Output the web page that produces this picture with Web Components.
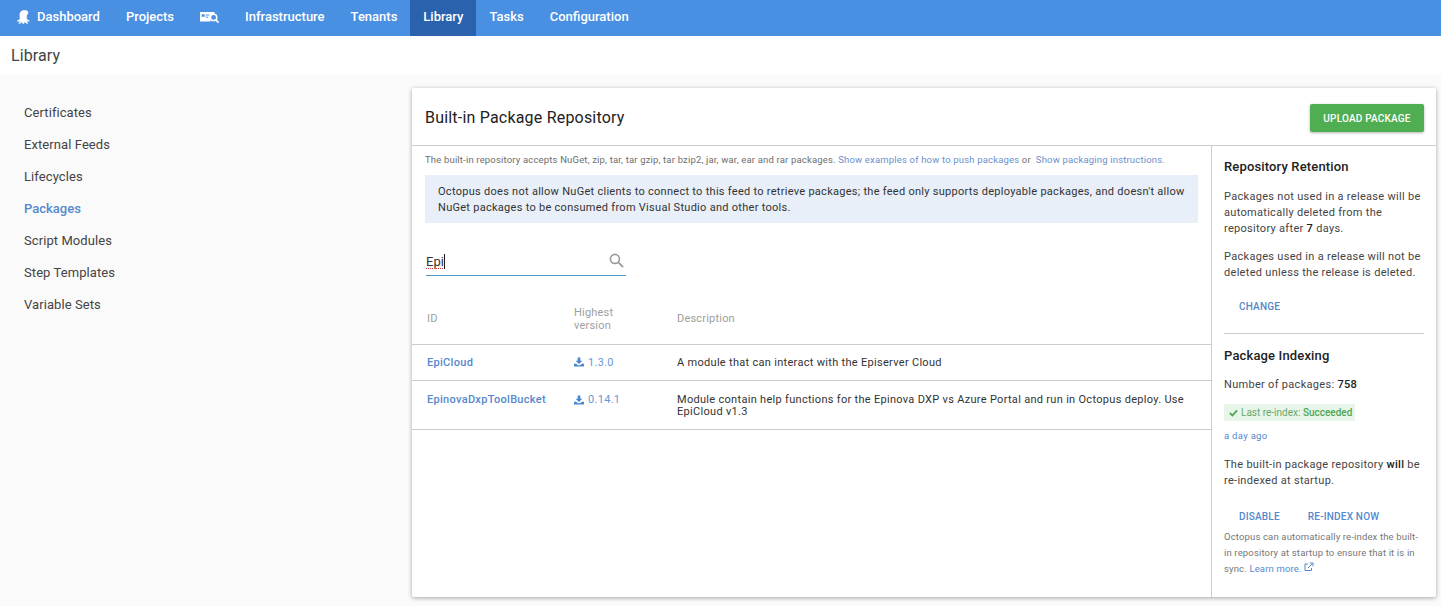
<!DOCTYPE html>
<html>
<head>
<meta charset="utf-8">
<title>Library</title>
<style>
  html, body { margin: 0; padding: 0; background: #fafafa; }
  body { font-family: Roboto, "Liberation Sans", sans-serif; color: #333; width: 1441px; height: 606px; overflow: hidden; }
</style>
</head>
<body>
<app-nav>
  <nav-item>
    <svg slot="icon" width="15" height="14" viewBox="0 0 15 14"><path fill="#fff" stroke="#fff" stroke-width=".5" d="M7.5.3C4.3.3 2.800 2.500 2.800 5c0 1.500.4 2.500.2 3.500-.2 1-1.200 1.700-2.400 2-.5.2-.4.8.1.8 1 0 1.800-.2 2.500-.6-.1 .9-.5 1.600-1.200 2.100-.4.3-.1.8.4.7 1.100-.2 2-1 2.500-2 .2.800.3 1.300.8 1.900.4.400.8.400 1.200 0 .4-.6.600-1.200.800-1.900.5 1 1.400 1.800 2.500 2 .5.100.8-.4.4-.7-.7-.5-1.100-1.200-1.200-2.100.7.400 1.500.6 2.500.6.500 0 .6-.6.100-.8-1.200-.3-2.200-1-2.400-2-.2-1 .2-2 .2-3.500C12.200 2.500 10.700.3 7.500.3z"/></svg>
    Dashboard
  </nav-item>
  <nav-item>Projects</nav-item>
  <nav-item>
    <svg slot="icon" width="19" height="14" viewBox="0 0 19 14"><path fill="#fff" d="M0 2h14.500v1.800a5 5 0 0 0-3.700 7.700H0z"/><rect x="1.700" y="4.300" width="3" height="2.500" fill="#4a90e2"/><rect x="5.800" y="4.500" width="3.500" height="1" fill="#4a90e2"/><rect x="5.800" y="6.700" width="2.500" height="1" fill="#4a90e2"/><circle cx="13.600" cy="7.400" r="3.200" fill="none" stroke="#fff" stroke-width="1.500"/><path d="M15.900 9.800l2.600 2.900" stroke="#fff" stroke-width="1.700" fill="none"/></svg>
  </nav-item>
  <nav-item>Infrastructure</nav-item>
  <nav-item>Tenants</nav-item>
  <nav-item active>Library</nav-item>
  <nav-item>Tasks</nav-item>
  <nav-item>Configuration</nav-item>
</app-nav>
<page-title>Library</page-title>
<page-body>
  <side-nav>
    <side-link>Certificates</side-link>
    <side-link>External Feeds</side-link>
    <side-link>Lifecycles</side-link>
    <side-link active>Packages</side-link>
    <side-link>Script Modules</side-link>
    <side-link>Step Templates</side-link>
    <side-link>Variable Sets</side-link>
  </side-nav>
  <repo-card>
    <span slot="title">Built-in Package Repository</span>
    <upload-button slot="action">UPLOAD PACKAGE</upload-button>
    <repo-main slot="main"></repo-main>
    <repo-side slot="side"></repo-side>
  </repo-card>
</page-body>

<script>
class AppNav extends HTMLElement {
  constructor() {
    super();
    this.attachShadow({ mode: "open" });
    this.shadowRoot.innerHTML = `
    <style>
      :host { display: flex; height: 36px; background: #4a90e2; padding-left: 4px; }
    </style>
    <slot></slot>`;
  }
}

class NavItem extends HTMLElement {
  constructor() {
    super();
    this.attachShadow({ mode: "open" });
    this.shadowRoot.innerHTML = `
    <style>
      :host { display: flex; align-items: center; gap: 5px; padding: 0 13px 3px; color: #fff; font-size: 13px; font-weight: 500; }
      :host([active]) { background: #2a62ae; }
    </style>
    <slot name="icon"></slot><slot></slot>`;
  }
}

class PageTitle extends HTMLElement {
  constructor() {
    super();
    this.attachShadow({ mode: "open" });
    this.shadowRoot.innerHTML = `
    <style>
      :host { display: flex; align-items: center; height: 39px; background: #fff; padding-left: 11px; font-size: 16px; color: #444; letter-spacing: 0.1px; }
    </style>
    <slot></slot>`;
  }
}

class PageBody extends HTMLElement {
  constructor() {
    super();
    this.attachShadow({ mode: "open" });
    this.shadowRoot.innerHTML = `
    <style>
      :host { display: flex; padding: 13px 5px 0 0; align-items: flex-start; }
    </style>
    <slot></slot>`;
  }
}

class SideNav extends HTMLElement {
  constructor() {
    super();
    this.attachShadow({ mode: "open" });
    this.shadowRoot.innerHTML = `
    <style>
      :host { display: flex; flex-direction: column; width: 412px; flex: none; padding-top: 8px; box-sizing: border-box; }
    </style>
    <slot></slot>`;
  }
}

class SideLink extends HTMLElement {
  constructor() {
    super();
    this.attachShadow({ mode: "open" });
    this.shadowRoot.innerHTML = `
    <style>
      :host { display: flex; align-items: center; height: 32px; padding-left: 24px; font-size: 13px; color: #444; letter-spacing: 0.08px; }
      :host([active]) { color: #5588cc; font-weight: 500; letter-spacing: 0; }
    </style>
    <slot></slot>`;
  }
}

class RepoCard extends HTMLElement {
  constructor() {
    super();
    this.attachShadow({ mode: "open" });
    this.shadowRoot.innerHTML = `
    <style>
      :host { display: block; width: 1024px; height: 509px; background: #fff; border-radius: 2px; box-shadow: 0 1px 4px rgba(0,0,0,0.35); }
      header { display: flex; align-items: center; justify-content: space-between; height: 55px; padding: 2px 12px 0 13px; border-bottom: 1px solid #ccc; font-size: 16px; color: #222; letter-spacing: 0.2px; }
      .cols { display: flex; height: 451px; }
      .main { flex: 1; min-width: 0; }
      .side { width: 224px; flex: none; border-left: 1px solid #ccc; }
    </style>
    <header><slot name="title"></slot><slot name="action"></slot></header>
    <div class="cols">
      <div class="main"><slot name="main"></slot></div>
      <div class="side"><slot name="side"></slot></div>
    </div>`;
  }
}

class UploadButton extends HTMLElement {
  constructor() {
    super();
    this.attachShadow({ mode: "open" });
    this.shadowRoot.innerHTML = `
    <style>
      :host { display: flex; align-items: center; justify-content: center; box-sizing: border-box; width: 114px; height: 28px; padding-top: 1px; background: #4fae52; color: #fff; font-size: 10px; letter-spacing: 0.2px; font-weight: 500; border-radius: 2px; box-shadow: 0 1px 3px rgba(0,0,0,0.3); }
    </style>
    <slot></slot>`;
  }
}

class RepoMain extends HTMLElement {
  constructor() {
    super();
    this.attachShadow({ mode: "open" });
    this.shadowRoot.innerHTML = `
    <style>
      :host { display: block; }
      a { color: #6b8fcc; text-decoration: none; }
      .top { padding: 0 13px; }
      .intro { height: 29px; padding-bottom: 2px; box-sizing: border-box; display: flex; align-items: center; font-size: 9.5px; color: #6e6e6e; white-space: pre; letter-spacing: 0.17px; }
      .note { background: #e8eff9; height: 48px; padding: 1px 13px 0; display: flex; align-items: center; font-size: 11px; line-height: 16px; color: #333; letter-spacing: 0.28px; box-sizing: border-box; }
      .search { position: relative; width: 200px; height: 38px; margin: 15px 0 0 1px; padding-bottom: 6px; border-bottom: 1px solid #4f9cc4; box-sizing: border-box; font-size: 13px; display: flex; align-items: flex-end; color: #333; }
      .search span { text-decoration: underline dotted #d33 1px; text-underline-offset: 2px; }
      .search i { width: 1px; height: 15px; background: #222; }
      .search svg { position: absolute; right: 2px; top: 15px; }
      .row { display: grid; grid-template-columns: 147px 103px 1fr; align-items: center; padding-left: 15px; border-bottom: 1px solid #ccc; font-size: 11px; letter-spacing: 0.3px; box-sizing: border-box; }
      .head { height: 69px; padding-top: 17px; color: #9e9e9e; letter-spacing: 0.2px; line-height: 13px; }
      .r1 { height: 36px; color: #333; }
      .r2 { height: 49px; color: #333; align-items: start; padding-top: 13px; line-height: 12px; }
      .id { font-weight: 500; color: #5588cc; }
      .ver { color: #6b97d4; display: flex; align-items: center; gap: 4px; }
      .r2 > div { padding-right: 14px; }
    </style>
    <div class="top">
      <div class="intro">The built-in repository accepts NuGet, zip, tar, tar gzip, tar bzip2, jar, war, ear and rar packages. <a>Show examples of how to push packages</a> or  <a>Show packaging instructions.</a></div>
      <div class="note"><div>Octopus does not allow NuGet clients to connect to this feed to retrieve packages; the feed only supports deployable packages, and doesn't allow NuGet packages to be consumed from Visual Studio and other tools.</div></div>
      <div class="search"><span>Epi</span><i></i>
        <svg width="15" height="15" viewBox="0 0 16 16"><circle cx="6.300" cy="6.300" r="4.800" fill="none" stroke="#9a9a9a" stroke-width="1.700"/><path d="M9.800 9.800l5.200 5.200" stroke="#9a9a9a" stroke-width="2" fill="none"/></svg>
      </div>
    </div>
    <div class="row head"><div>ID</div><div>Highest<br>version</div><div>Description</div></div>
    <div class="row r1"><div class="id">EpiCloud</div><div class="ver"><dl-icon></dl-icon>1.3.0</div><div>A module that can interact with the Episerver Cloud</div></div>
    <div class="row r2"><div class="id">EpinovaDxpToolBucket</div><div class="ver"><dl-icon></dl-icon>0.14.1</div><div>Module contain help functions for the Epinova DXP vs Azure Portal and run in Octopus deploy. Use EpiCloud v1.3</div></div>`;
  }
}

class DlIcon extends HTMLElement {
  constructor() {
    super();
    this.attachShadow({ mode: "open" });
    this.shadowRoot.innerHTML = `
    <style>:host { display: inline-flex; margin-top: -1px; }</style>
    <svg width="10" height="10" viewBox="0 0 11 10"><path fill="#4a86d0" d="M4 0h3v3.500h2.200L5.500 7.200 1.800 3.500H4zM0 7h2.500l1.800 1.500h2.400L8.500 7H11v3H0z"/></svg>`;
  }
}

class RepoSide extends HTMLElement {
  constructor() {
    super();
    this.attachShadow({ mode: "open" });
    this.shadowRoot.innerHTML = `
    <style>
      :host { display: block; padding: 0 12px; font-size: 11px; line-height: 16px; color: #444; letter-spacing: 0.3px; }
      h3 { margin: 0; font-size: 13px; font-weight: 500; color: #222; line-height: 16px; letter-spacing: 0.15px; }
      p { margin: 0; }
      b { font-weight: 500; color: #222; }
      a { color: #5588cc; text-decoration: none; }
      .actions { display: flex; gap: 28px; padding-left: 15px; font-size: 10px; font-weight: 500; color: #5588cc; line-height: 12px; letter-spacing: 0.2px; }
      hr { border: 0; border-top: 1px solid #ccc; margin: 20px 0 14px; }
      .badge { display: inline-flex; align-items: center; gap: 3px; height: 17px; background: #e8f5e9; padding: 0 3px 0 5px; font-size: 10px; color: #6aa76d; letter-spacing: 0; white-space: pre; }
      .badge b { color: #4fa653; }
      .small { font-size: 9.5px; line-height: 16px; color: #777; letter-spacing: 0.15px; }
    </style>
    <h3 style="margin-top:13px">Repository Retention</h3>
    <p style="margin-top:14px">Packages not used in a release will be<br>automatically deleted from the<br>repository after <b>7</b> days.</p>
    <p style="margin-top:12px">Packages used in a release will not be<br>deleted unless the release is deleted.</p>
    <div class="actions" style="margin-top:20px">CHANGE</div>
    <hr>
    <h3>Package Indexing</h3>
    <p style="margin-top:13px">Number of packages: <b>758</b></p>
    <div style="margin-top:11px;display:flex"><span class="badge"><svg width="9" height="8" viewBox="0 0 10 8"><path d="M1 4l2.800 2.800L9 1.200" fill="none" stroke="#4fa653" stroke-width="2"/></svg><span>Last re-index: <b>Succeeded</b></span></span></div>
    <p style="margin-top:7px;font-size:9.5px"><a>a day ago</a></p>
    <p style="margin-top:13px">The built-in package repository <b>will</b> be<br>re-indexed at startup.</p>
    <div class="actions" style="margin-top:22px"><span>DISABLE</span><span>RE-INDEX NOW</span></div>
    <p class="small" style="margin-top:6px">Octopus can automatically re-index the built-<br>in repository at startup to ensure that it is in<br>sync. <a>Learn more.</a> <svg width="10" height="10" viewBox="0 0 10 10"><path d="M7.500 6v2.500h-6.500v-6.500h3" fill="none" stroke="#5588cc" stroke-width="1"/><path d="M4 6l4.500-4.500M5.800 1h3.200v3.200" fill="none" stroke="#5588cc" stroke-width="1"/></svg></p>`;
  }
}

customElements.define("app-nav", AppNav);
customElements.define("nav-item", NavItem);
customElements.define("page-title", PageTitle);
customElements.define("page-body", PageBody);
customElements.define("side-nav", SideNav);
customElements.define("side-link", SideLink);
customElements.define("repo-card", RepoCard);
customElements.define("upload-button", UploadButton);
customElements.define("repo-main", RepoMain);
customElements.define("dl-icon", DlIcon);
customElements.define("repo-side", RepoSide);
</script>
</body>
</html>
